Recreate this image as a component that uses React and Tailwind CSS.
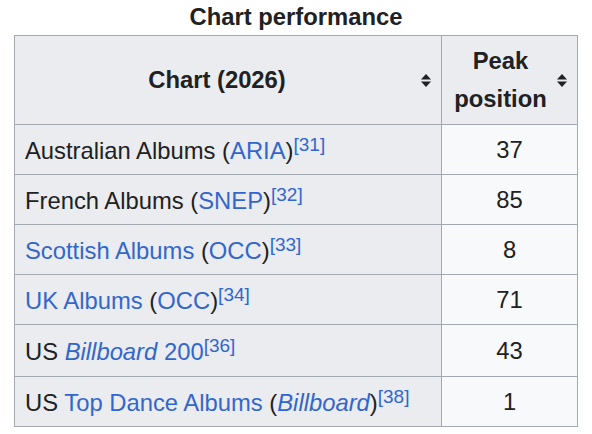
import React from 'react';

const SortIcon = () => (
  <svg width="10" height="13" viewBox="0 0 10 13" className="shrink-0">
    <polygon points="0,5.5 5,0 10,5.5" fill="#202122" />
    <polygon points="0,7.5 5,13 10,7.5" fill="#202122" />
  </svg>
);

const Link = ({ children, italic }) => (
  <span className={`text-[#3366cc] ${italic ? 'italic' : ''}`}>{children}</span>
);

const Ref = ({ n }) => (
  <sup className="text-[19px] leading-none text-[#3366cc] relative top-[1px] align-super">[{n}]</sup>
);

const rows = [
  {
    chart: (
      <>
        Australian Albums (<Link>ARIA</Link>)
      </>
    ),
    ref: 31,
    peak: 37,
  },
  {
    chart: (
      <>
        French Albums (<Link>SNEP</Link>)
      </>
    ),
    ref: 32,
    peak: 85,
  },
  {
    chart: (
      <>
        <Link>Scottish Albums</Link> (<Link>OCC</Link>)
      </>
    ),
    ref: 33,
    peak: 8,
  },
  {
    chart: (
      <>
        <Link>UK Albums</Link> (<Link>OCC</Link>)
      </>
    ),
    ref: 34,
    peak: 71,
  },
  {
    chart: (
      <>
        US <Link italic>Billboard</Link> <Link>200</Link>
      </>
    ),
    ref: 36,
    peak: 43,
  },
  {
    chart: (
      <>
        US <Link>Top Dance Albums</Link> (<Link italic>Billboard</Link>)
      </>
    ),
    ref: 38,
    peak: 1,
  },
];

export default function App() {
  return (
    <div className="min-h-screen bg-white font-['Liberation_Sans',Arial,sans-serif] text-[#202122]">
      <div className="pl-[14px] w-[578px]">
        {/* Caption */}
        <div className="h-[35px] text-center text-[23.8px] font-bold leading-[33px]">
          Chart performance
        </div>

        <table className="w-[563px] table-fixed border-collapse border border-[#a2a9b1] text-[23.8px]">
          <colgroup>
            <col className="w-[427px]" />
            <col className="w-[136px]" />
          </colgroup>
          <thead>
            <tr className="h-[89px] bg-[#eaecf0]">
              <th className="border border-[#a2a9b1] p-0 font-bold">
                <div className="flex items-center pl-[10px] pr-[10px]">
                  <span className="flex-1 text-center -translate-x-[6px]">Chart (2026)</span>
                  <SortIcon />
                </div>
              </th>
              <th className="border border-[#a2a9b1] p-0 font-bold leading-[38px]">
                <div className="flex items-center pl-[2px] pr-[10px]">
                  <span className="flex-1 text-center">
                    Peak
                    <br />
                    position
                  </span>
                  <SortIcon />
                </div>
              </th>
            </tr>
          </thead>
          <tbody>
            {rows.map((r, i) => (
              <tr key={i} className={i === 4 ? 'h-[52px]' : 'h-[50px]'}>
                <td className="border border-[#a2a9b1] bg-[#eaecf0] px-[10px] py-0 leading-[30px] whitespace-nowrap">
                  {r.chart}
                  <Ref n={r.ref} />
                </td>
                <td className="border border-[#a2a9b1] bg-[#f8f9fa] px-[9px] py-0 text-center leading-[30px]">
                  {r.peak}
                </td>
              </tr>
            ))}
          </tbody>
        </table>
      </div>
    </div>
  );
}
